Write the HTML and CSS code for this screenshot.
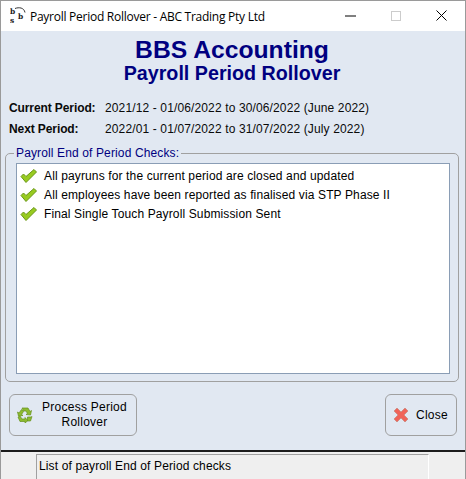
FILE: index.html
```html
<!DOCTYPE html>
<html lang="en">
<head>
<meta charset="utf-8">
<title>Payroll Period Rollover</title>
<link rel="stylesheet" href="styles.css">
</head>
<body>
<div class="window">
  <header class="titlebar">
    <svg class="app-icon" width="18" height="18" viewBox="0 0 18 18">
      <text class="logo-letter" x="0" y="7">b</text>
      <text class="logo-letter" x="8" y="12">b</text>
      <text class="logo-letter" x="0" y="16">s</text>
      <path d="M5 1.500c4-1.500 9-1 10 4" fill="none" stroke="#333" stroke-width="1"/>
    </svg>
    <span class="title-text">Payroll Period Rollover - ABC Trading Pty Ltd</span>
    <div class="window-controls">
      <svg class="ctl" width="46" height="30" viewBox="0 0 46 30"><path d="M18 15h11" stroke="#000" stroke-width="1"/></svg>
      <svg class="ctl" width="46" height="30" viewBox="0 0 46 30"><rect x="18.500" y="10.500" width="9" height="9" fill="none" stroke="#ccc"/></svg>
      <svg class="ctl" width="46" height="30" viewBox="0 0 46 30"><path d="M17.500 9.500l10 10M27.500 9.500l-10 10" stroke="#000" stroke-width="1"/></svg>
    </div>
  </header>
  <main class="content">
    <h1 class="app-name">BBS Accounting</h1>
    <h2 class="page-name">Payroll Period Rollover</h2>
    <div class="periods">
      <div class="period"><span class="period-label">Current Period:</span><span>2021/12 - 01/06/2022 to 30/06/2022 (June 2022)</span></div>
      <div class="period"><span class="period-label">Next Period:</span><span>2022/01 - 01/07/2022 to 31/07/2022 (July 2022)</span></div>
    </div>
    <fieldset class="checks">
      <legend class="checks-legend">Payroll End of Period Checks:</legend>
      <ul class="check-list">
        <li class="check-item"><svg class="tick" width="18" height="14" viewBox="0 0 18 14"><path d="M1 7.500l2.500-2.500 2.500 2.500 8-7 2.500 2.500-10.500 10.500z" fill="#98cb20" stroke="#6b9618" stroke-width="1" stroke-linejoin="round"/></svg>All payruns for the current period are closed and updated</li>
        <li class="check-item"><svg class="tick" width="18" height="14" viewBox="0 0 18 14"><path d="M1 7.500l2.500-2.500 2.500 2.500 8-7 2.500 2.500-10.500 10.500z" fill="#98cb20" stroke="#6b9618" stroke-width="1" stroke-linejoin="round"/></svg>All employees have been reported as finalised via STP Phase II</li>
        <li class="check-item"><svg class="tick" width="18" height="14" viewBox="0 0 18 14"><path d="M1 7.500l2.500-2.500 2.500 2.500 8-7 2.500 2.500-10.500 10.500z" fill="#98cb20" stroke="#6b9618" stroke-width="1" stroke-linejoin="round"/></svg>Final Single Touch Payroll Submission Sent</li>
      </ul>
    </fieldset>
    <div class="actions">
      <button class="btn btn-process" type="button">
        <svg width="16" height="16" viewBox="0 0 16 16" fill="#8dbb2e" stroke="#66901c" stroke-width=".7">
          <path d="M5 1h6l2 3.500 1.500-1-1 4.500-4.500-.5 1.500-1-1.500-2.500h-2.500z"/>
          <path d="M4.500 2.500l2 2-2 3 1.500 1-4.500.5-1-4 1.500 1z"/>
          <path d="M1 10l2-1 2 3h3v-1.500l3 3-3 2.500v-1.500h-5z"/>
          <path d="M15 9.500l-1.500 4.500h-3v-4h3.500z"/>
        </svg>
        <span class="btn-label">Process Period<br>Rollover</span>
      </button>
      <button class="btn btn-close" type="button">
        <svg width="16" height="16" viewBox="0 0 16 16"><path d="M1 4l3-3 4 4 4-4 3 3-4 4 4 4-3 3-4-4-4 4-3-3 4-4z" fill="#f0645a" stroke="#c9897f" stroke-width=".8" stroke-linejoin="round"/></svg>
        <span>Close</span>
      </button>
    </div>
  </main>
  <footer class="statusbar"><div class="status-panel">List of payroll End of Period checks</div></footer>
</div>
</body>
</html>
```
FILE: styles.css
```css
* { box-sizing: border-box; }
html, body { margin: 0; height: 100%; }
body { font-family: "Liberation Sans", Arial, sans-serif; font-size: 12px; letter-spacing: .13px; color: #000; background: #efefef; }
.window { width: 466px; height: 479px; display: flex; flex-direction: column; border: 1px solid #9a9a9a; border-bottom: 0; overflow: hidden; }
.titlebar { height: 30px; flex: none; background: #fff; display: flex; align-items: center; padding-left: 9px; }
.app-icon { flex: none; margin-right: 2px; }
.logo-letter { font-family: "DejaVu Serif", serif; font-size: 7.5px; font-weight: bold; fill: #222; letter-spacing: 0; }
.title-text { font-family: "Open Sans", sans-serif; font-size: 12px; letter-spacing: -.26px; white-space: nowrap; }
.window-controls { margin-left: auto; display: flex; }
.ctl { display: block; }
.content { flex: 1; background: #e1e8f2; border-bottom: 2px solid #1c1c1c; padding: 7px 6px 0 4px; display: flex; flex-direction: column; }
.app-name, .page-name { margin: 0; text-align: center; color: #000080; font-weight: bold; letter-spacing: 0; }
.app-name { font-size: 24.7px; line-height: 24px; }
.page-name { font-size: 19.7px; line-height: 24px; margin-top: -1px; }
.periods { margin: 15px 0 0 4px; display: flex; flex-direction: column; gap: 6px; color: #0a0a0a; }
.period { display: flex; height: 15px; align-items: center; white-space: nowrap; }
.period-label { font-weight: bold; letter-spacing: -.1px; width: 96px; flex: none; }
.checks { margin: 11px 0 0; padding: 3px 8px 8px 10px; border: 1px solid #a0a0a0; border-radius: 5px; height: 235px; min-width: 0; }
.checks-legend { color: #000080; padding: 0 2px; margin-left: -2px; line-height: 13px; }
.check-list { list-style: none; margin: 0; padding: 2px 3px; height: 211px; background: #fff; border: 1px solid #8a9db5; }
.check-item { display: flex; align-items: center; height: 19px; white-space: nowrap; }
.tick { flex: none; margin-right: 6px; }
.actions { margin-top: 12px; display: flex; justify-content: space-between; padding: 0 2px 0 4px; }
.btn { height: 42px; font: inherit; letter-spacing: .25px; color: #000; background: #e1e8f2; border: 1px solid #a0a0a0; border-radius: 6px; display: flex; align-items: center; padding: 0; }
.btn-process { width: 128px; padding-left: 7px; }
.btn-label { flex: 1; text-align: center; line-height: 15px; }
.btn-close { width: 72px; padding-left: 7px; gap: 7px; }
.statusbar { height: 27px; flex: none; background: #efefef; padding: 2px 36px 0 35px; }
.status-panel { height: 25px; padding: 4px 2px; border: 1px solid #a0a0a0; border-right-color: #fff; border-bottom: 0; }
```
